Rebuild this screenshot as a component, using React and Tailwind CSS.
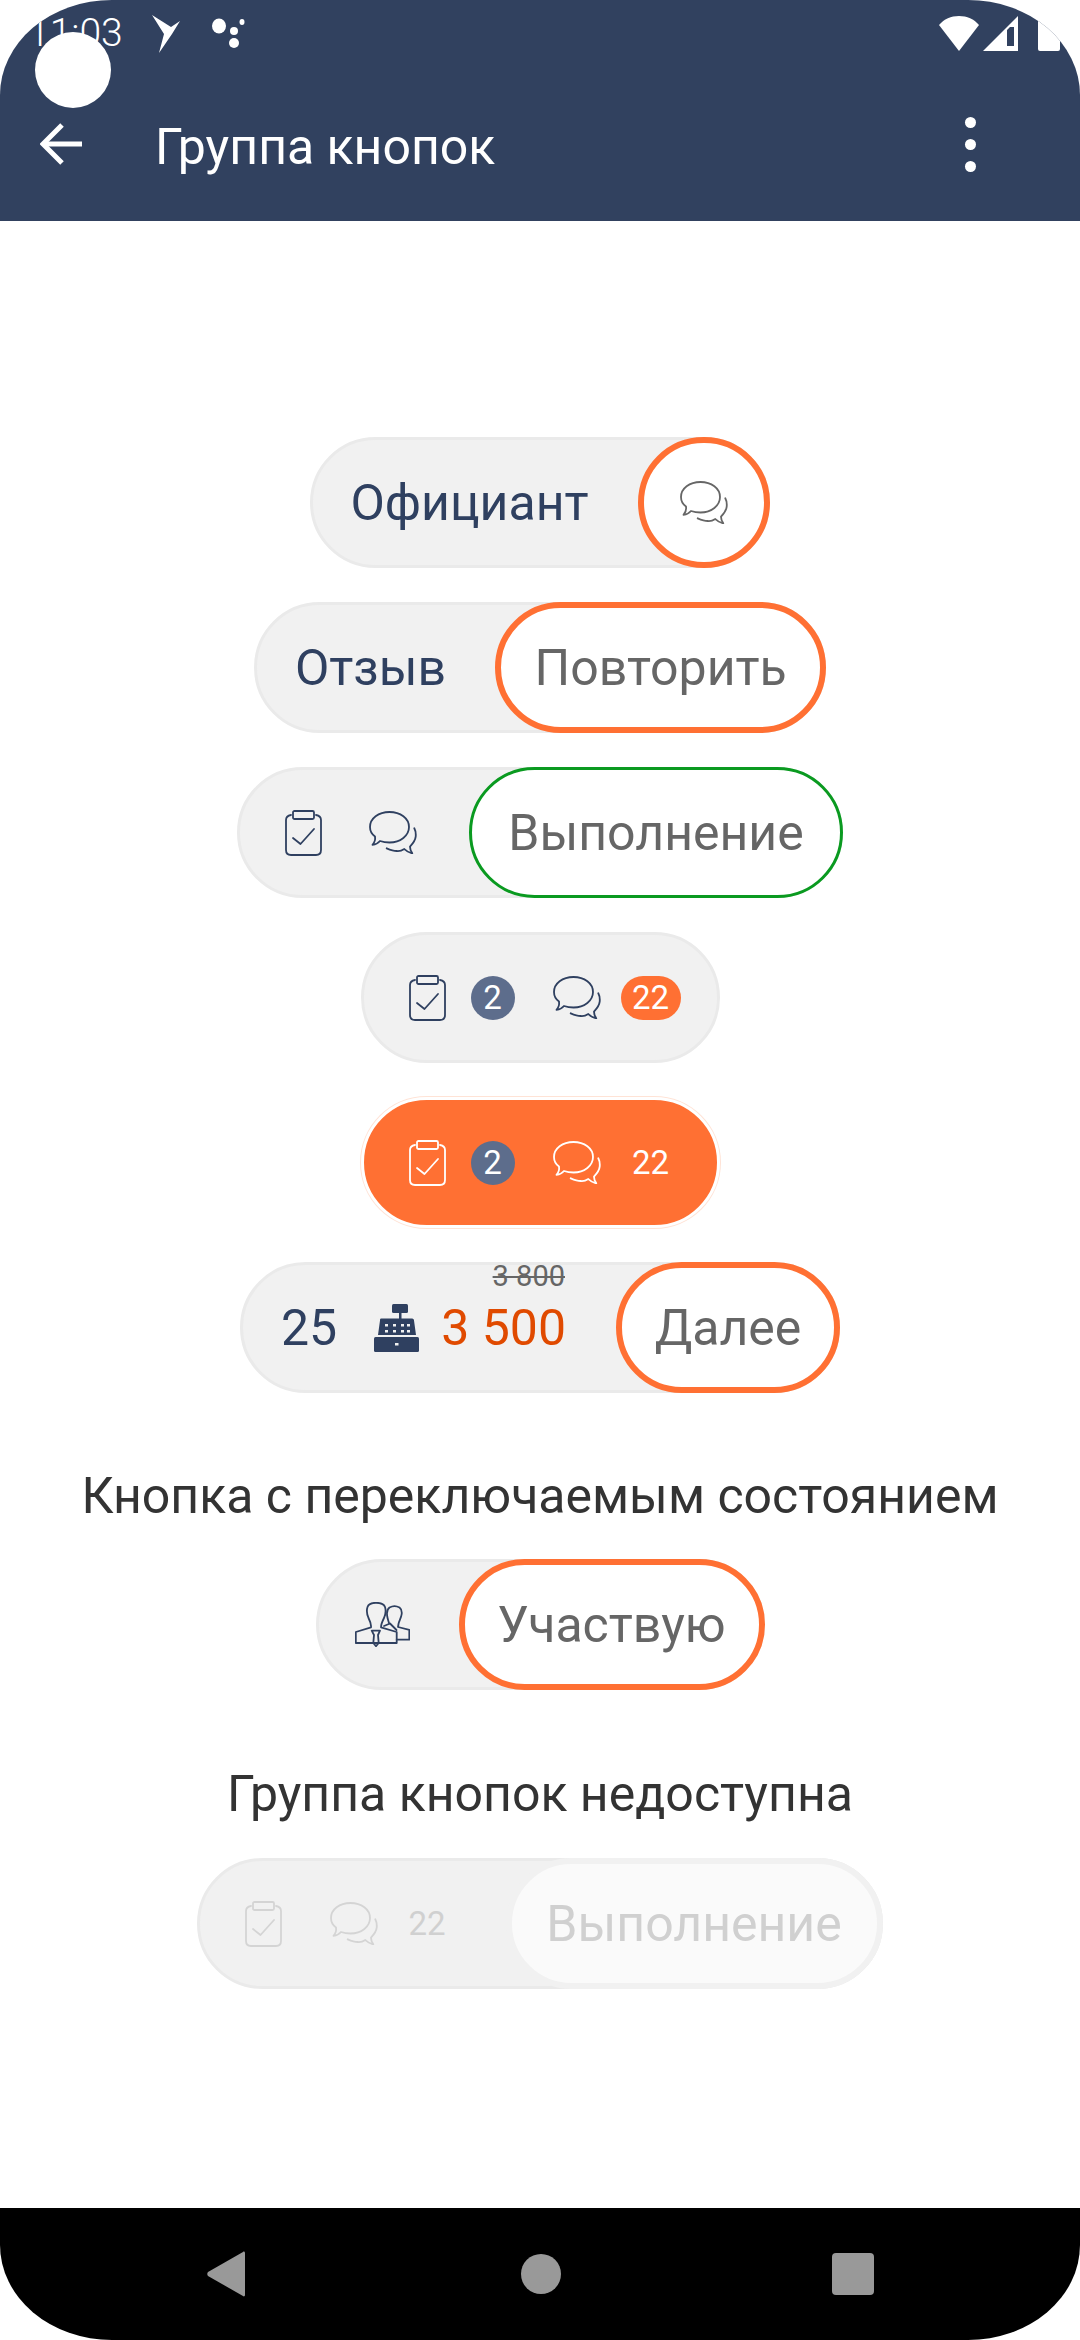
const navy = '#2f4060';

function ChatIcon({ color = navy, className = '' }) {
  return (
    <svg viewBox="0 0 48 43" fill="none" stroke={color} strokeWidth="1.800" strokeLinejoin="round" strokeLinecap="round" className={`w-[48px] h-[43px] shrink-0 ${className}`}>
      <path d="M6 25.500 C2.500 23 1 19.500 1 16 C1 7.500 9.500 1 20.500 1 C31.500 1 40 7.500 40 16 C40 24.500 31.500 31.500 20.500 31.500 C17 31.500 14 31 11 30 C9 32.500 6.500 33.500 3.500 33.800 C5.500 31.500 6.500 28.500 6 25.500 Z" />
      <path d="M45.300 17.300 C46.500 19.500 47 22.500 46.700 25.700 C46.300 29.500 44 32.500 41 35.700 C41 38 42 40.500 43.300 42.300 C40.500 41.800 37.500 40.300 35.300 38 C32.500 39.800 30 40.300 27.700 40 C24 40 20.500 38.500 17.700 37.300" />
    </svg>
  );
}

function ClipboardIcon({ color = navy }) {
  return (
    <svg viewBox="0 0 37 46" fill="none" stroke={color} strokeWidth="1.800" strokeLinejoin="round" strokeLinecap="round" className="w-[37px] h-[46px] shrink-0">
      <path d="M6 5 C3 5.500 1 7.500 1 10 L1 40 C1 43 3 45 6 45 L31 45 C34 45 36 43 36 40 L36 10 C36 7.500 34 5.500 31 5" />
      <rect x="8" y="1" width="21" height="8" rx="1.500" />
      <path d="M8 28 L15.500 34 L29 19" />
    </svg>
  );
}

function RegisterIcon() {
  return (
    <svg viewBox="0 0 45 48" className="w-[45px] h-[48px] shrink-0 ml-[37px]" fill={navy}>
      <rect x="18" y="0" width="16" height="9" rx="1.500" />
      <rect x="25" y="9" width="2.500" height="6" />
      <path d="M7 14.500 H38 C39.500 14.500 40 15.500 40 16.500 L42 31 H4 L6 16.500 C6 15.500 6 14.500 7 14.500 Z" />
      <rect x="0" y="33" width="45" height="15" rx="1.500" />
      <g fill="#f1f1f1">
        <rect x="11" y="20" width="3" height="2.500" />
        <rect x="19" y="20" width="3" height="2.500" />
        <rect x="27" y="20" width="3" height="2.500" />
        <rect x="33" y="20" width="3" height="2.500" />
        <rect x="11" y="26" width="3" height="2.500" />
        <rect x="19" y="26" width="3" height="2.500" />
        <rect x="27" y="26" width="3" height="2.500" />
        <rect x="33" y="26" width="3" height="2.500" />
        <rect x="21" y="39" width="3.500" height="2.500" />
      </g>
    </svg>
  );
}

function PeopleIcon() {
  return (
    <svg viewBox="0 0 55 45" fill="none" stroke={navy} strokeWidth="1.800" strokeLinejoin="round" strokeLinecap="round" className="w-[55px] h-[45px] shrink-0">
      <path d="M16 25.300 C16.500 22 15 19 13.500 16 C12 12.500 11.500 8 12.500 5 C13.500 2 17 0.800 21 0.800 C25.500 0.800 29 2 30 5 C31 8 30.500 12.500 29 16 C27.500 19 26 22 26 25.300 L41.700 30 L41.700 41 L0.800 41 L0.800 30 Z" />
      <path d="M16.700 28.700 L25 28.700 L23 33 L23.700 41 L21 44.300 L18.300 41 L19 33 Z" />
      <path d="M29 24 L35 21.500 L41.500 28" />
      <path d="M34 21 C33 18 32 15 32 12 C31.800 9 32.500 7 34.500 5.500 C37.500 3.800 41.500 3.800 44.500 5.500 C46.500 7 47 9 46.700 12 C46.200 16 44 19 43.500 22 L43 25 L54.300 27.800 L54.300 37.700 L41.700 37.700" />
    </svg>
  );
}

function Pill({ children, className = 'bg-[#f1f1f1] border-[#eaeaea]' }) {
  return (
    <div className={`flex items-center h-[131px] rounded-full border-[3px] ${className}`}>
      {children}
    </div>
  );
}

function Action({ children, className = '', tone = 'border-[6px] border-[#ff7033] bg-white text-[#666666]' }) {
  return (
    <div className={`flex items-center justify-center h-[131px] -my-[3px] -mr-[3px] rounded-full text-[50px] leading-none shrink-0 ${tone} ${className}`}>
      {children}
    </div>
  );
}

function Badge({ children, className = '' }) {
  return (
    <span className={`flex items-center justify-center h-[44px] rounded-full text-white text-[33px] leading-none shrink-0 ${className}`}>
      {children}
    </span>
  );
}

export default function App() {
  return (
    <div className="relative flex flex-col h-[2340px] w-[1080px] overflow-hidden rounded-[112px/95px] bg-white font-['Roboto',sans-serif]">
      <header className="h-[221px] bg-[#31415f] text-white shrink-0">
        <div className="flex items-center justify-between h-[67px] pl-[28px] pr-[20px]">
          <div className="flex items-center">
            <span className="text-[39px] leading-none font-light">11:03</span>
            <svg viewBox="0 0 29 38" className="w-[29px] h-[38px] ml-[29px]" fill="white">
              <path d="M0 0 L19 12 L28 6 L20 19 L7 38 L12 19 Z" />
            </svg>
            <svg viewBox="0 0 34 30" className="w-[34px] h-[30px] ml-[30px] mt-[-2px]" fill="white">
              <ellipse cx="8" cy="8" rx="7" ry="7.500" />
              <ellipse cx="23" cy="13" rx="4" ry="4" />
              <ellipse cx="31" cy="4" rx="2.500" ry="3" />
              <ellipse cx="23" cy="25" rx="5" ry="5" />
            </svg>
          </div>
          <div className="flex items-center gap-[4px]">
            <svg viewBox="0 0 40 35" className="w-[40px] h-[35px]" fill="white">
              <path d="M0 9 C5 3 12 0 20 0 C28 0 35 3 40 9 L20 35 Z" />
            </svg>
            <svg viewBox="0 0 35 35" className="w-[35px] h-[35px]" fill="white">
              <path d="M35 0 V35 H0 Z M27 11 L24 14 V30 H31 V11 Z" fillRule="evenodd" />
            </svg>
            <div className="w-[22px] h-[35px] ml-[16px] bg-white rounded-b-[2px]" />
          </div>
        </div>
        <div className="flex items-center h-[154px] pl-[40px] pr-[104px]">
          <svg viewBox="0 0 42 42" fill="none" stroke="white" strokeWidth="5" className="w-[42px] h-[42px] shrink-0">
            <path d="M42 21 H4" />
            <path d="M22 2 L3 21 L22 40" />
          </svg>
          <h1 className="ml-[73px] text-[50px] leading-none font-normal mt-[6px]">Группа кнопок</h1>
          <div className="ml-auto flex flex-col gap-[11px]">
            <span className="w-[11px] h-[11px] rounded-full bg-white" />
            <span className="w-[11px] h-[11px] rounded-full bg-white" />
            <span className="w-[11px] h-[11px] rounded-full bg-white" />
          </div>
        </div>
      </header>
      <span className="absolute left-[35px] top-[32px] w-[76px] h-[76px] rounded-full bg-white" />

      <main className="flex-1 flex flex-col items-center pt-[216px]">
        <div className="flex flex-col items-center gap-[34px]">
          <Pill>
            <span className="pl-[37px] text-[50px] leading-none text-[#2f4060]">Официант</span>
            <Action className="w-[132px] ml-[49px]"><ChatIcon color="#666666" /></Action>
          </Pill>
          <Pill>
            <span className="pl-[38px] text-[50px] leading-none text-[#2f4060]">Отзыв</span>
            <Action className="w-[331px] ml-[49px]">Повторить</Action>
          </Pill>
          <Pill>
            <span className="w-[45px]" />
            <ClipboardIcon />
            <ChatIcon className="ml-[47px]" />
            <Action className="w-[374px] ml-[52px]" tone="border-[3px] border-[#0a9a20] bg-white text-[#666666]">Выполнение</Action>
          </Pill>
          <Pill>
            <span className="w-[45px]" />
            <ClipboardIcon />
            <Badge className="w-[44px] ml-[25px] bg-[#5d6d8c]">2</Badge>
            <ChatIcon className="ml-[38px]" />
            <Badge className="w-[60px] ml-[20px] bg-[#ff7033]">22</Badge>
            <span className="w-[36px]" />
          </Pill>
          <Pill className="bg-[#ff7033] border-white shadow-[0_0_0_1px_#ffe3d6]">
            <span className="w-[45px]" />
            <ClipboardIcon color="white" />
            <Badge className="w-[44px] ml-[25px] bg-[#5d6d8c]">2</Badge>
            <ChatIcon color="white" className="ml-[38px]" />
            <Badge className="w-[60px] ml-[20px]">22</Badge>
            <span className="w-[36px]" />
          </Pill>
          <Pill>
            <span className="pl-[38px] text-[50px] leading-none text-[#2f4060]">25</span>
            <RegisterIcon />
            <div className="relative ml-[22px]">
              <span className="absolute right-[1px] top-[-41px] text-[29px] leading-none text-[#666666] line-through whitespace-nowrap">3 800</span>
              <span className="block text-[50px] leading-none text-[#e04a00] whitespace-nowrap">3 500</span>
            </div>
            <Action className="w-[224px] ml-[50px]">Далее</Action>
          </Pill>
        </div>

        <p className="mt-[77px] text-[50px] leading-[52px] text-[#333333]">Кнопка с переключаемым состоянием</p>

        <div className="mt-[37px]">
          <Pill>
            <span className="w-[36px]" />
            <PeopleIcon />
            <Action className="w-[306px] ml-[49px]">Участвую</Action>
          </Pill>
        </div>

        <p className="mt-[78px] text-[50px] leading-[52px] text-[#333333]">Группа кнопок недоступна</p>

        <div className="mt-[38px]">
          <Pill>
            <span className="w-[45px]" />
            <ClipboardIcon color="#d4d4d4" />
            <ChatIcon color="#d4d4d4" className="ml-[48px]" />
            <span className="ml-[30px] text-[33px] leading-none text-[#d0d0d0]">22</span>
            <Action className="w-[377px] ml-[60px]" tone="border-[6px] border-[#f1f1f1] bg-[#fafafa] text-[#d0d0d0]">Выполнение</Action>
          </Pill>
        </div>
      </main>

      <nav className="relative flex items-center h-[132px] bg-black shrink-0 pl-[207px]">
        <svg viewBox="0 0 38 46" className="w-[38px] h-[46px] shrink-0" fill="#999999">
          <path d="M36 1 C37 0 38 1 38 2 V44 C38 45 37 46 36 45 L1 25 C0 24 0 22 1 21 Z" />
        </svg>
        <span className="ml-[276px] w-[40px] h-[40px] rounded-full bg-[#999999] shrink-0" />
        <span className="ml-[271px] w-[42px] h-[42px] rounded-[4px] bg-[#999999] shrink-0" />
      </nav>
    </div>
  );
}
